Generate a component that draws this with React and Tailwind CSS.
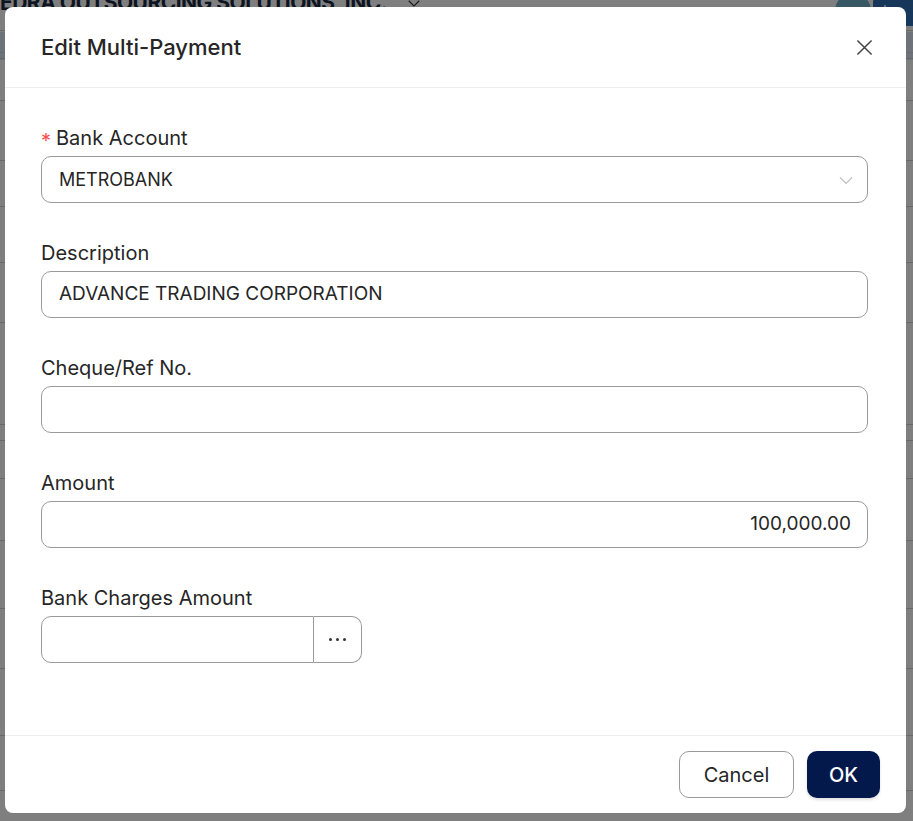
import React from 'react';

const fields = [
    { label: 'Description', value: 'ADVANCE TRADING CORPORATION' },
    { label: 'Cheque/Ref No.', value: '' },
    { label: 'Amount', value: '100,000.00', right: true },
];

const rowLines = [30, 52, 58, 100, 160, 206, 262, 322, 424, 440, 478, 540, 608, 668, 735, 790];

const App = () => {
    return (
        <div className="relative h-[821px] w-[913px] overflow-hidden bg-white font-['Inter',sans-serif] text-[#262626]">
            {/* page behind the dialog */}
            <div className="flex items-center h-[30px] -mt-[12px]">
                <span className="text-[21px] font-bold tracking-tight text-[#1c2a44] whitespace-nowrap">EDRA OUTSOURCING SOLUTIONS, INC.</span>
                <svg className="ml-[18px]" width="18" height="18" viewBox="0 0 24 24" fill="none" stroke="#333" strokeWidth="1.5">
                    <path d="M5 9l7 7 7-7" />
                </svg>
                <div className="ml-auto flex items-center h-[30px] mt-[16px]">
                    <div className="w-[40px] h-[40px] rounded-full bg-[#6fb0c8] border-2 border-white"></div>
                    <div className="h-[30px] w-[40px] bg-[#2f6fb5] text-white text-[14px] pl-[10px] pt-[4px] rounded-l-md">Lu</div>
                </div>
            </div>
            <div className="h-[28px] bg-[#dbe6f2] mt-[14px]"></div>
            {rowLines.map((y, i) => (
                <div key={i} className="absolute left-0 right-0 border-b border-[#d0d0d0]" style={{ top: y }}></div>
            ))}

            {/* overlay */}
            <div className="absolute inset-0 bg-black/50 pl-[5px] pt-[7px]">
                <div className="w-[901px] h-[806px] bg-white rounded-[8px] flex flex-col">
                    <div className="h-[81px] flex items-center pl-[36px] pr-[30px] border-b border-[#eeeeee] shrink-0">
                        <h2 className="text-[22px] font-medium text-[#262626]">Edit Multi-Payment</h2>
                        <button className="ml-auto w-[24px] h-[24px] flex items-center justify-center text-[#444]">
                            <svg width="17" height="17" viewBox="0 0 18 18" fill="none" stroke="currentColor" strokeWidth="1.6">
                                <path d="M1.5 1.5l15 15M16.5 1.5l-15 15" />
                            </svg>
                        </button>
                    </div>

                    <div className="flex-1 pt-[36px] pl-[36px] pr-[38px]">
                        <div>
                            <label className="h-[28px] flex items-center text-[20px] text-[#262626]">
                                <span className="text-[#ff4d4f] text-[20px] mr-[5px] mt-[6px]">*</span>Bank Account
                            </label>
                            <div className="mt-[4px] h-[47px] border border-[#9a9a9a] rounded-[10px] flex items-center pl-[17px] pr-[14px]">
                                <span className="text-[18px]">METROBANK</span>
                                <svg className="ml-auto" width="14" height="14" viewBox="0 0 14 14" fill="none" stroke="#bfbfbf" strokeWidth="1.2">
                                    <path d="M1 4.5l6 6 6-6" />
                                </svg>
                            </div>
                        </div>

                        {fields.map((f) => (
                            <div key={f.label} className="mt-[36px]">
                                <label className="h-[28px] flex items-center text-[20px] text-[#262626]">{f.label}</label>
                                <div className={`mt-[4px] h-[47px] border border-[#9a9a9a] rounded-[10px] flex items-center pl-[17px] pr-[16px] ${f.right ? 'justify-end' : ''}`}>
                                    <span className="text-[19px]">{f.value}</span>
                                </div>
                            </div>
                        ))}

                        <div className="mt-[36px]">
                            <label className="h-[28px] flex items-center text-[20px] text-[#262626]">Bank Charges Amount</label>
                            <div className="mt-[4px] flex h-[47px] w-[321px]">
                                <div className="flex-1 border border-[#9a9a9a] rounded-l-[10px]"></div>
                                <button className="w-[48px] border border-l-0 border-[#9a9a9a] rounded-r-[10px] flex items-center justify-center gap-[4px]">
                                    <span className="w-[3px] h-[3px] rounded-full bg-[#333]"></span>
                                    <span className="w-[3px] h-[3px] rounded-full bg-[#333]"></span>
                                    <span className="w-[3px] h-[3px] rounded-full bg-[#333]"></span>
                                </button>
                            </div>
                        </div>
                    </div>

                    <div className="h-[78px] border-t border-[#eeeeee] flex items-start justify-end gap-[13px] pt-[15px] pr-[26px] shrink-0">
                        <button className="w-[115px] h-[47px] border border-[#9a9a9a] rounded-[10px] text-[20px] text-[#262626] bg-white">Cancel</button>
                        <button className="w-[73px] h-[47px] rounded-[10px] text-[20px] font-medium text-white bg-[#03194c] shadow-[0_2px_3px_rgba(0,0,0,0.12)]">OK</button>
                    </div>
                </div>
            </div>
        </div>
    );
};

export default App;
